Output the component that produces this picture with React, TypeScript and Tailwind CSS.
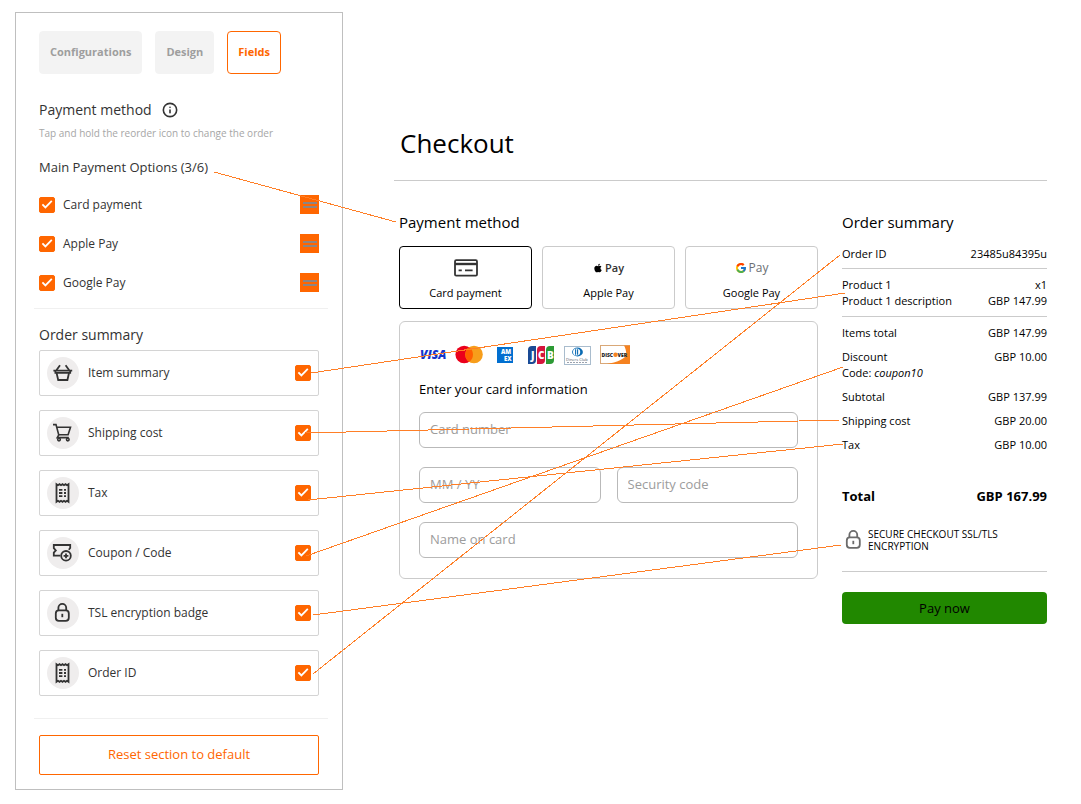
import { useState } from "react";
import type { ReactNode } from "react";
import clsx from "clsx";
import { Info } from "lucide-react";
import { FaApple } from "react-icons/fa";
import { FcGoogle } from "react-icons/fc";

interface IconProps {
  className?: string;
}

interface ICheckboxProps {
  id: string;
  checked: boolean;
  onChange: () => void;
}

const stroke = {
  fill: "none",
  stroke: "currentColor",
  strokeWidth: 1.8,
};

const BasketIcon = () => (
  <svg viewBox="0 0 24 24" className="w-6 h-6" {...stroke}>
    <path d="M2.4 9.6h18.8M4.4 9.6v2.2h14.8V9.600" />
    <path d="M5.6 12l1.600 7h9.200l1.600-7M5.4 9.200l3.600-5M18.2 9.200l-3.600-5" />
  </svg>
);

const CartIcon = () => (
  <svg viewBox="0 0 24 24" className="w-6 h-6" {...stroke} strokeWidth={1.6}>
    <path d="M2 3.6h3l2.7 10.2h9.4l2.4-7.6H6" />
    <path d="M7.8 13.8l-1.6 2.8h11.6" />
    <circle cx="8" cy="18.6" r="1.3" />
    <circle cx="16.8" cy="18.6" r="1.3" />
  </svg>
);

const ReceiptIcon = () => (
  <svg viewBox="0 0 24 24" className="w-6 h-6" {...stroke}>
    <path d="M5.5 3.2l1.5 1 1.5-1 1.5 1 1.5-1 1.5 1 1.5-1 1.5 1 1.5-1v17.6l-1.5-1-1.5 1-1.5-1-1.5 1-1.5-1-1.5 1-1.5-1-1.5 1z" />
    <path d="M8 8.8h3.4M13 8.8h2M8 12h3.4M13 12h2M8 15.2h3.4M13 15.2h2" />
  </svg>
);

const CouponIcon = () => (
  <svg viewBox="0 0 24 24" className="w-6 h-6" {...stroke}>
    <path d="M9.4 14.6H2.8v-3l2-2.2-2-2.2V4h16.4v3l-1.4 1.8" />
    <circle cx="15" cy="14.8" r="4.8" />
    <path d="M15 12.4v4.8M12.6 14.8h4.8" />
  </svg>
);

const LockIcon = ({ className = "w-6 h-6" }: IconProps) => (
  <svg viewBox="0 0 24 24" className={className} {...stroke}>
    <path d="M7.4 9.4V6.8a3.9 3.9 0 0 1 7.8 0v2.6" />
    <rect x="4.8" y="9.4" width="13" height="10.4" rx="3" />
    <path d="M11.3 12.8v3.4" />
  </svg>
);

const CardIcon = () => (
  <svg viewBox="0 0 24 18" className="w-6 h-[18px]" {...stroke}>
    <rect x="1" y="1.2" width="22" height="15.4" rx="1.2" />
    <path d="M1 5h22" strokeWidth="2.4" />
    <path d="M4.6 11.4h3.2M11 11.4h7.6" />
  </svg>
);

const CardBrands = () => (
  <div className="flex items-center gap-[9px] h-[22px]">
    <svg viewBox="0 0 27 20" className="w-[27px] h-5 overflow-visible">
      <text
        x="1"
        y="14"
        fontSize="12"
        fontWeight="800"
        fontStyle="italic"
        fill="#1434cb"
      >
        VISA
      </text>
    </svg>
    <svg viewBox="0 0 28 20" className="w-7 h-5">
      <circle cx="9.2" cy="9.5" r="8.8" fill="#eb001b" />
      <circle cx="19" cy="9.5" r="8.8" fill="#f79e1b" />
      <path d="M14.1 2.2a8.8 8.8 0 0 1 0 14.6a8.8 8.8 0 0 1 0-14.6" fill="#ff5f00" />
    </svg>
    <svg viewBox="0 0 26 20" className="w-[26px] h-5">
      <rect x="5" y="2" width="16" height="16" fill="#016fd0" />
      <g fontSize="6" fontWeight="800" fill="#fff">
        <text x="9" y="9">AM</text>
        <text x="12" y="16">EX</text>
      </g>
    </svg>
    <svg viewBox="0 0 27 20" className="w-[27px] h-5">
      <path d="M1 5a4 4 0 0 1 4-4h4v14a4 4 0 0 1-4 4H1z" fill="#1a4a94" />
      <path d="M10 5a4 4 0 0 1 4-4h4v14a4 4 0 0 1-4 4h-4z" fill="#d4143c" />
      <path d="M19 5a4 4 0 0 1 4-4h4v14a4 4 0 0 1-4 4h-4z" fill="#2c9a35" />
      <g fontSize="10" fontWeight="800" fill="#fff">
        <text x="4" y="14">J</text>
        <text x="11" y="14">C</text>
        <text x="20" y="14">B</text>
      </g>
    </svg>
    <svg viewBox="0 0 28 20" className="w-7 h-5">
      <rect x="1.5" y="1.5" width="26" height="18" fill="#fff" stroke="#a9bccd" />
      <ellipse cx="14.5" cy="7" rx="5.4" ry="4.4" fill="#0a6bb3" />
      <circle cx="13.6" cy="7" r="3.6" fill="#fff" />
      <path d="M12.6 4.2v5.6M14.6 4.2v5.6" stroke="#0a6bb3" strokeWidth="1.1" />
      <text x="3" y="16" fontSize="4" fill="#4b5563">
        Diners Club
      </text>
      <path d="M4 17.5h21" stroke="#9ca3af" strokeDasharray="2 1" />
    </svg>
    <svg viewBox="0 0 30 20" className="w-[30px] h-5">
      <rect x="0.5" y="0.5" width="29" height="18" fill="#fff" stroke="#d9a878" />
      <path d="M29.5 8v11H7c10-1.5 17-5 22.5-11z" fill="#f58220" />
      <path d="M24 0.5h6v18h-6c3-5 3-13 0-18" fill="#f58220" />
      <g fontSize="5" fontWeight="800" fill="#222">
        <text x="1.5" y="11.5">DISC</text>
        <text x="17.5" y="11.5">VER</text>
      </g>
      <circle cx="15.5" cy="9.7" r="2.2" fill="#f58220" />
    </svg>
  </div>
);

const Checkbox = ({ id, checked, onChange }: ICheckboxProps) => (
  <span className="grid w-4 h-4 shrink-0">
    <input
      id={id}
      type="checkbox"
      checked={checked}
      onChange={onChange}
      className="col-start-1 row-start-1 w-4 h-4 appearance-none rounded-xs border border-[#ff6600] checked:bg-[#ff6600]"
    />
    <svg
      viewBox="0 0 16 16"
      className="col-start-1 row-start-1 w-4 h-4 pointer-events-none"
      fill="none"
      stroke="#fff"
      strokeWidth="1.8"
    >
      {checked && <path d="M3.4 7.4l3 3 6.4-6.6" />}
    </svg>
  </span>
);

const tabs = ["Configurations", "Design", "Fields"];

const paymentOptions = ["Card payment", "Apple Pay", "Google Pay"];

const summaryFields: { label: string; icon: ReactNode }[] = [
  { label: "Item summary", icon: <BasketIcon /> },
  { label: "Shipping cost", icon: <CartIcon /> },
  { label: "Tax", icon: <ReceiptIcon /> },
  { label: "Coupon / Code", icon: <CouponIcon /> },
  { label: "TSL encryption badge", icon: <LockIcon /> },
  { label: "Order ID", icon: <ReceiptIcon /> },
];

// Each line links a setting on the left to its place in the checkout
const connectors = [
  [214, 172, 396, 222],
  [311, 373, 845, 293],
  [305, 433, 840, 420],
  [308, 500, 843, 444],
  [306, 556, 843, 367],
  [313, 615, 841, 545],
  [313, 674, 840, 255],
];

const SettingsPanel = () => {
  const [activeTab, setActiveTab] = useState("Fields");
  const [hidden, setHidden] = useState<string[]>([]);

  const toggle = (name: string) => {
    setHidden((prev) =>
      prev.includes(name) ? prev.filter((n) => n !== name) : [...prev, name]
    );
  };

  return (
    <aside className="w-[328px] shrink-0 border border-[#bfbfbf] px-[23px] pt-[18px] pb-3.5 text-[#333]">
      <div className="flex gap-[13px]">
        {tabs.map((tab) => (
          <button
            key={tab}
            onClick={() => setActiveTab(tab)}
            className={clsx(
              "h-[43px] px-2.5 rounded border text-[11px] font-bold",
              tab === activeTab
                ? "border-[#ff6600] text-[#ff6600]"
                : "border-[#f3f3f3] bg-[#f3f3f3] text-[#9e9e9e]"
            )}
          >
            {tab}
          </button>
        ))}
      </div>

      <h2 className="flex items-center gap-2.5 mt-[26px] text-sm leading-5">
        Payment method
        <Info className="w-4 h-4" strokeWidth={2.4} />
      </h2>
      <p className="mt-[5px] text-[10px] leading-4 text-[#a6a6a6]">
        Tap and hold the reorder icon to change the order
      </p>
      <h3 className="mt-4 text-[13px] leading-5">Main Payment Options (3/6)</h3>
      <ul className="mt-2">
        {paymentOptions.map((option) => (
          <li key={option} className="flex items-center h-[39px]">
            <Checkbox
              id={`option-${option}`}
              checked={!hidden.includes(option)}
              onChange={() => toggle(option)}
            />
            <label htmlFor={`option-${option}`} className="ml-2 text-xs">
              {option}
            </label>
            <button
              aria-label={`Reorder ${option}`}
              className="flex flex-col items-center justify-center gap-0.5 ml-auto w-[19px] h-[19px] bg-[#ff6600]"
            >
              <span className="w-3.5 h-0.5 bg-[#8c8583]" />
              <span className="w-3.5 h-0.5 bg-[#8c8583]" />
            </button>
          </li>
        ))}
      </ul>

      <hr className="mt-1.5 -ml-[5px] -mr-[9px] border-[#f0f0f0]" />
      <h2 className="mt-4 text-sm leading-5">Order summary</h2>
      <ul className="flex flex-col gap-3.5 mt-[5px]">
        {summaryFields.map(({ label, icon }) => (
          <li
            key={label}
            className="flex items-center h-[46px] px-[7px] border border-[#d4d4d4] rounded-xs"
          >
            <span className="flex items-center justify-center w-8 h-8 rounded-full bg-[#efeded]">
              {icon}
            </span>
            <label htmlFor={`field-${label}`} className="ml-[9px] mr-auto text-xs">
              {label}
            </label>
            <Checkbox
              id={`field-${label}`}
              checked={!hidden.includes(label)}
              onChange={() => toggle(label)}
            />
          </li>
        ))}
      </ul>

      <hr className="mt-[22px] -ml-[5px] -mr-[9px] border-[#f0f0f0]" />
      <button
        onClick={() => setHidden([])}
        className="mt-4 w-full h-10 border border-[#ff6600] rounded-xs text-[13px] text-[#ff6600]"
      >
        Reset section to default
      </button>
    </aside>
  );
};

const methodLogos: Record<string, ReactNode> = {
  "Card payment": <CardIcon />,
  "Apple Pay": (
    <>
      <FaApple className="w-2.5 h-2.5 text-black" />
      <span className="text-[11px] font-semibold">Pay</span>
    </>
  ),
  "Google Pay": (
    <>
      <FcGoogle className="w-3 h-3" />
      <span className="text-xs font-medium text-[#6b6f74]">Pay</span>
    </>
  ),
};

const CardInput = ({ label }: { label: string }) => (
  <input
    aria-label={label}
    placeholder={label}
    className="w-full min-w-0 h-9 px-2.5 pb-0.5 border border-[#b9b9b9] rounded-md text-[13px] placeholder:text-[#9c9c9c]"
  />
);

const PaymentForm = () => {
  const [method, setMethod] = useState("Card payment");

  return (
    <section className="flex-1 min-w-0">
      <h2 className="text-[15px] leading-5">Payment method</h2>
      <div className="grid grid-cols-3 gap-2.5 mt-3.5">
        {paymentOptions.map((option) => (
          <button
            key={option}
            onClick={() => setMethod(option)}
            className={clsx(
              "flex flex-col items-center pt-2.5 pb-[7px] border rounded",
              option === method ? "border-black" : "border-[#cbcbcb]"
            )}
          >
            <span className="flex items-center gap-0.5 h-[22px] text-[#333]">
              {methodLogos[option]}
            </span>
            <span className="mt-1.5 text-[11px] leading-4">{option}</span>
          </button>
        ))}
      </div>

      <form className="mt-3 px-[19px] pt-[22px] pb-5 border border-[#cbcbcb] rounded-md">
        <CardBrands />
        <h3 className="mt-[13px] text-[13px] leading-5 font-medium">
          Enter your card information
        </h3>
        <div className="grid gap-[19px] mt-[13px]">
          <CardInput label="Card number" />
          <div className="grid grid-cols-2 gap-4">
            <CardInput label="MM / YY" />
            <CardInput label="Security code" />
          </div>
          <CardInput label="Name on card" />
        </div>
      </form>
    </section>
  );
};

const Row = ({ label, value }: { label: ReactNode; value: string }) => (
  <div className="flex justify-between">
    <dt>{label}</dt>
    <dd>{value}</dd>
  </div>
);

const OrderSummary = () => (
  <section className="w-[205px] shrink-0 text-[11px] leading-4">
    <h2 className="text-[15px] leading-5">Order summary</h2>
    <dl className="mt-3.5">
      <Row label="Order ID" value="23485u84395u" />
    </dl>
    <hr className="mt-1.5 border-[#cbcbcb]" />
    <dl className="mt-2">
      <Row label="Product 1" value="x1" />
      <Row label="Product 1 description" value="GBP 147.99" />
    </dl>
    <hr className="mt-[7px] border-[#cbcbcb]" />
    <dl className="grid gap-2 mt-2">
      <Row label="Items total" value="GBP 147.99" />
      <Row
        label={
          <>
            Discount
            <br />
            Code: <em>coupon10</em>
          </>
        }
        value="GBP 10.00"
      />
      <Row label="Subtotal" value="GBP 137.99" />
      <Row label="Shipping cost" value="GBP 20.00" />
      <Row label="Tax" value="GBP 10.00" />
    </dl>
    <dl className="mt-[33px] text-[13px] leading-5 font-bold">
      <Row label="Total" value="GBP 167.99" />
    </dl>
    <div className="flex items-center gap-0.5 mt-[22px]">
      <LockIcon className="w-6 h-6 shrink-0 text-[#6b6b6b]" />
      <p className="text-[10px] leading-3">
        SECURE CHECKOUT SSL/TLS ENCRYPTION
      </p>
    </div>
    <hr className="mt-[19px] border-[#cbcbcb]" />
    <button className="mt-5 w-full h-8 rounded bg-[#218800] text-[13px]">
      Pay now
    </button>
  </section>
);

const App = () => {
  return (
    <div className="relative flex items-start min-h-screen pt-3 pl-[15px] pr-[34px] bg-white font-['Open_Sans',sans-serif] text-black">
      <SettingsPanel />
      <main className="flex-1 min-w-0 ml-[51px] pt-[113px]">
        <h1 className="ml-1.5 text-[26px] leading-9">Checkout</h1>
        <hr className="mt-[19px] border-[#cbcbcb]" />
        <div className="flex gap-6 mt-[31px] ml-[5px]">
          <PaymentForm />
          <OrderSummary />
        </div>
      </main>
      <svg
        width="1081"
        height="804"
        className="absolute top-0 left-0 pointer-events-none"
        stroke="#ff7f27"
        shapeRendering="crispEdges"
      >
        {connectors.map(([x1, y1, x2, y2], i) => (
          <line key={i} x1={x1} y1={y1} x2={x2} y2={y2} />
        ))}
      </svg>
    </div>
  );
};

export default App;
